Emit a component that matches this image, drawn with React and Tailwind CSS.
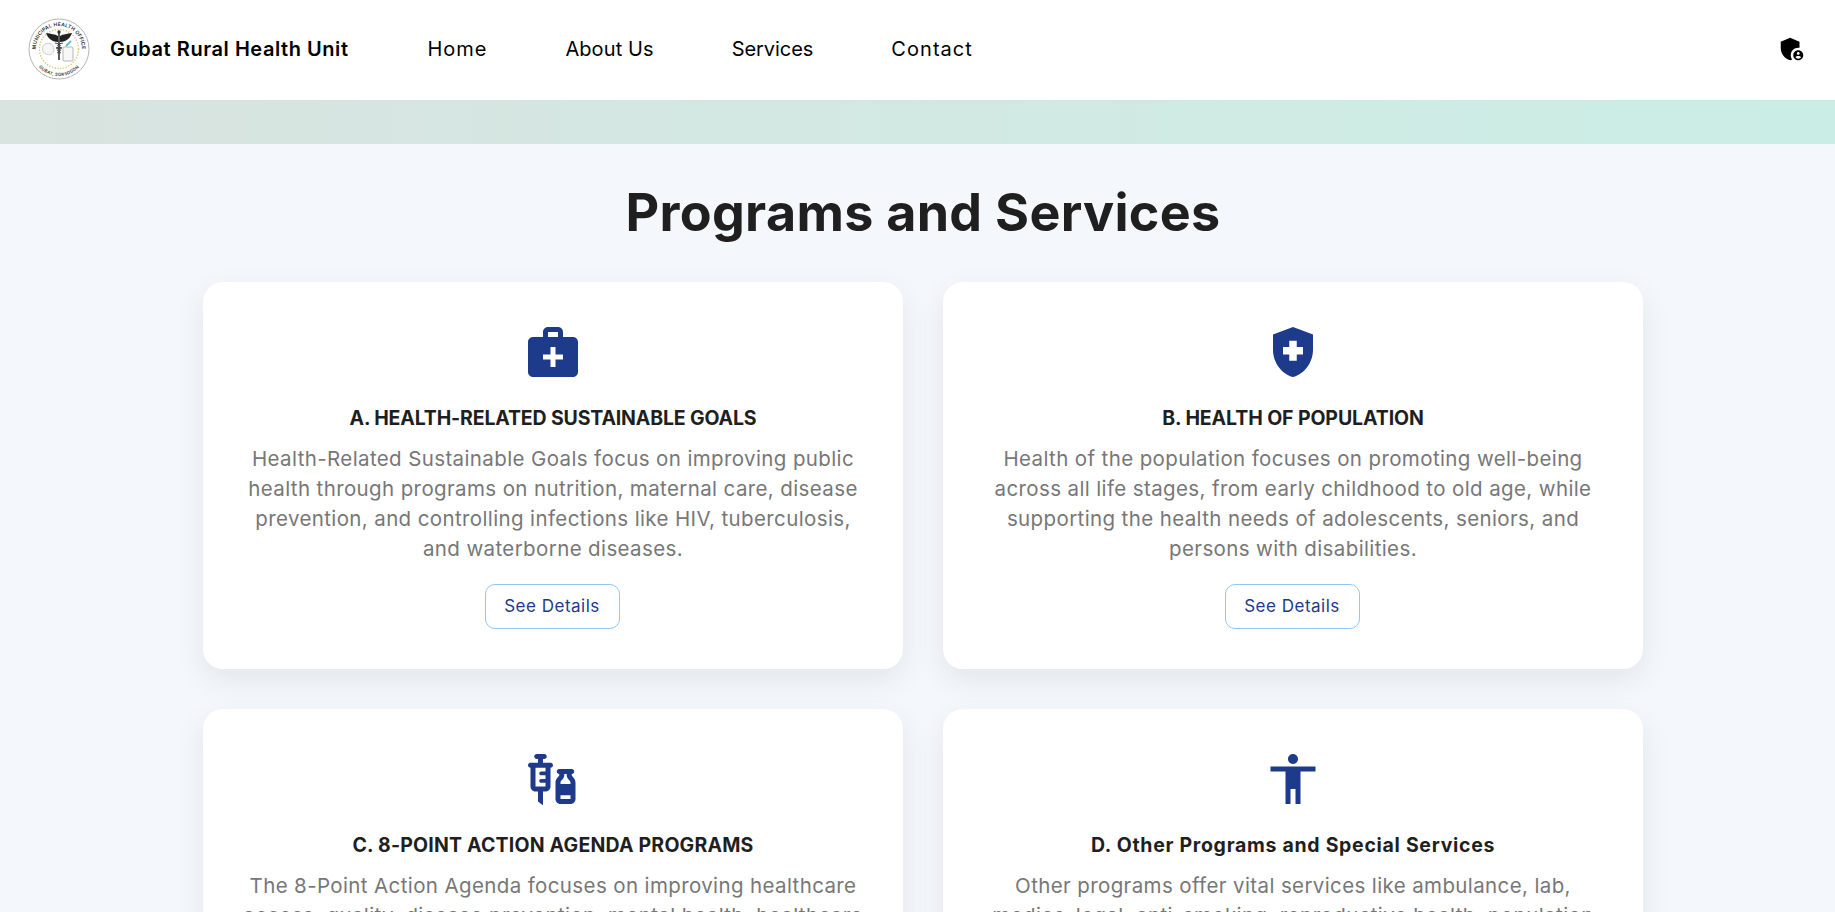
import { MdMedicalServices, MdHealthAndSafety, MdVaccines, MdAccessibility, MdAdminPanelSettings } from 'react-icons/md'

const navLinks = [
    { label: 'Home', className: 'tracking-[0.95px]' },
    { label: 'About Us', className: 'tracking-[0.1px]' },
    { label: 'Services', className: 'tracking-[-0.05px]' },
    { label: 'Contact', className: 'tracking-[1.05px]' },
]

const programs = [
    {
        title: 'A. HEALTH-RELATED SUSTAINABLE GOALS',
        titleClass: 'tracking-[-0.15px]',
        icon: MdMedicalServices,
        lines: [
            'Health-Related Sustainable Goals focus on improving public',
            'health through programs on nutrition, maternal care, disease',
            'prevention, and controlling infections like HIV, tuberculosis,',
            'and waterborne diseases.',
        ],
    },
    {
        title: 'B. HEALTH OF POPULATION',
        titleClass: 'tracking-[-0.1px]',
        icon: MdHealthAndSafety,
        lines: [
            'Health of the population focuses on promoting well-being',
            'across all life stages, from early childhood to old age, while',
            'supporting the health needs of adolescents, seniors, and',
            'persons with disabilities.',
        ],
    },
    {
        title: 'C. 8-POINT ACTION AGENDA PROGRAMS',
        titleClass: 'tracking-[0.2px]',
        icon: MdVaccines,
        lines: [
            'The 8-Point Action Agenda focuses on improving healthcare',
            'access, quality, disease prevention, mental health, healthcare',
            'financing, and service delivery for all communities.',
        ],
    },
    {
        title: 'D. Other Programs and Special Services',
        titleClass: 'tracking-[0.7px]',
        icon: MdAccessibility,
        lines: [
            'Other programs offer vital services like ambulance, lab,',
            'medico-legal, anti-smoking, reproductive health, population',
            'development, and other special community services.',
        ],
    },
]

function Logo() {
    return (
        <svg viewBox="0 0 62 62" className="h-[62px] w-[62px] shrink-0" aria-hidden="true">
            <circle cx="31" cy="31" r="30" fill="#fff" stroke="#b5b5b5" strokeWidth="1" />
            <circle cx="31" cy="31" r="19.5" fill="none" stroke="#d8c878" strokeWidth="1.4" strokeDasharray="1.3 1.5" />
            <defs>
                <path id="logo-top" d="M12.16 44.2 A23 23 0 1 1 49.84 44.2" />
                <path id="logo-bottom" d="M7.6 44.5 A27 27 0 0 0 54.4 44.5" />
            </defs>
            <text fontSize="5" fontWeight="600" fill="#2a2a2a" fontFamily="Inter, sans-serif" letterSpacing="0.2">
                <textPath href="#logo-top" startOffset="50%" textAnchor="middle">MUNICIPAL HEALTH OFFICE</textPath>
            </text>
            <text fontSize="4.2" fontWeight="600" fill="#2a2a2a" fontFamily="Inter, sans-serif" letterSpacing="0.3">
                <textPath href="#logo-bottom" startOffset="50%" textAnchor="middle">GUBAT, SORSOGON</textPath>
            </text>
            <path d="M18 15 C23 16 27 16 30 18 L30 24 C25 24 20 21 18 15Z M44 15 C39 16 35 16 32 18 L32 24 C37 24 42 21 44 15Z" fill="#222" />
            <rect x="30.2" y="14" width="1.6" height="28" fill="#333" />
            <circle cx="31" cy="14" r="1.7" fill="#333" />
            <path d="M27 25 C33 26 35 28 28 30 C34 31 34 33 29 35" fill="none" stroke="#444" strokeWidth="1" />
            <path d="M35 25 C29 26 27 28 34 30 C28 31 28 33 33 35" fill="none" stroke="#444" strokeWidth="1" />
            <path d="M17 26 C22 24 26 27 26 31 C26 36 21 38 18 36 C14 35 13 28 17 26Z" fill="#f5f5f5" stroke="#c4c4c4" strokeWidth="0.8" />
            <rect x="35" y="29" width="10" height="14" rx="1" fill="#f8f8f8" stroke="#a5a5a5" strokeWidth="0.8" />
            <path d="M38 28 L43 23" stroke="#5cc4c0" strokeWidth="1.8" />
        </svg>
    )
}

function ProgramCard({ program }) {
    const Icon = program.icon
    return (
        <div className="flex h-[387px] flex-col items-center rounded-[20px] bg-white pt-[40px] shadow-[0_10px_30px_rgba(0,0,0,0.08)]">
            <Icon className="h-[60px] w-[60px] text-[#1e3a8a]" />
            <h3 className={`mt-[21px] text-[19.5px] leading-[30px] font-bold text-[#1f1f1f] ${program.titleClass}`}>{program.title}</h3>
            <p className="mt-[11px] text-center text-[20.5px] leading-[30px] tracking-[0.38px] text-[#777777]">
                {program.lines.map((line) => (
                    <span key={line} className="block whitespace-nowrap">{line}</span>
                ))}
            </p>
            <button className="mt-[20px] mr-[2px] h-[45px] w-[135px] rounded-[10px] border border-[#93c5f5] bg-white text-[17px] tracking-[0.5px] text-[#1e3a8a]">
                See Details
            </button>
        </div>
    )
}

export default function App() {
    return (
        <div className="h-screen overflow-hidden bg-[#f4f7fc] font-['Inter',sans-serif]">
            <nav className="flex h-[100px] items-center bg-white pr-[28px] pb-[3px] pl-[28px]">
                <Logo />
                <span className="ml-[20px] text-[20px] font-semibold tracking-[0.55px] text-black">Gubat Rural Health Unit</span>
                <ul className="ml-[79px] flex gap-[78px] text-[20px] text-black">
                    {navLinks.map((link) => (
                        <li key={link.label} className={link.className}>{link.label}</li>
                    ))}
                </ul>
                <MdAdminPanelSettings className="ml-auto h-[30px] w-[30px] text-black" />
            </nav>
            <div className="h-[44px] bg-gradient-to-r from-[#d9e3e0] to-[#caeee5]" />
            <main className="ml-[203px] w-[1440px]">
                <h1 className="mt-[35px] text-center text-[52px] leading-[68px] font-bold tracking-[0.3px] text-[#1f1f1f]">Programs and Services</h1>
                <div className="mt-[35px] grid grid-cols-2 gap-[40px]">
                    {programs.map((program) => (
                        <ProgramCard key={program.title} program={program} />
                    ))}
                </div>
            </main>
        </div>
    )
}
